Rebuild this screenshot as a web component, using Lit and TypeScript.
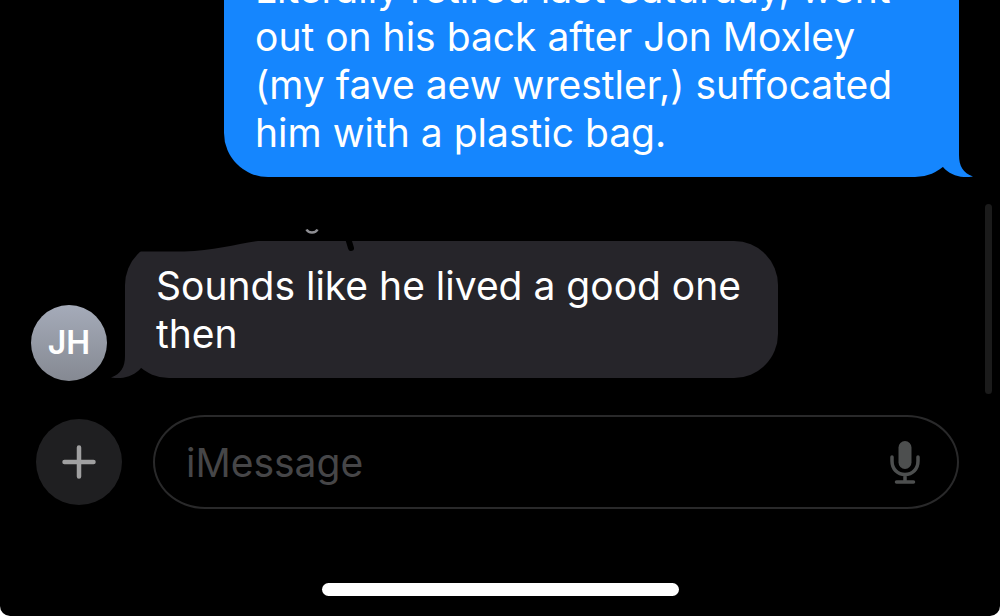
import { LitElement, html, css } from "lit";
import { customElement, property } from "lit/decorators.js";

@customElement("message-bubble")
class MessageBubble extends LitElement {
  @property({ type: Boolean, reflect: true }) sent = false;

  static styles = css`
    :host {
      display: block;
      position: relative;
      box-sizing: border-box;
      padding: 21px 31px 20px;
      border-radius: 44px;
      background: #26252a;
      color: #fff;
      max-width: 653px;
    }
    :host([sent]) {
      background: #1586fe;
      max-width: 735px;
    }
    .tail {
      position: absolute;
      bottom: 0;
      left: -14px;
      width: 36px;
      height: 44px;
      fill: #26252a;
      transform: scaleX(-1);
    }
    :host([sent]) .tail {
      left: auto;
      right: -14px;
      fill: #1586fe;
      transform: none;
    }
  `;

  render() {
    return html`<slot></slot>
      <svg class="tail" viewBox="0 0 36 44" aria-hidden="true">
        <path d="M0 0H22V22C22 33 26 40 36 43.5C25 45.500 13 42.500 6 34L0 28Z" />
      </svg>`;
  }
}

@customElement("app-root")
class AppRoot extends LitElement {
  static styles = css`
    :host {
      display: block;
      height: 100vh;
      background: #fff;
      font: 400 39px/48px Inter, "Liberation Sans", sans-serif;
    }
    .screen {
      display: flex;
      flex-direction: column;
      height: 100%;
      overflow: hidden;
      background: #000;
      border-radius: 0 0 10px 10px;
    }
    .thread {
      flex: 1;
      min-height: 0;
      position: relative;
      display: flex;
      flex-direction: column;
      justify-content: flex-end;
      gap: 64px;
      padding: 0 41px 34px 31px;
      overflow: hidden;
    }
    .sent {
      flex: none;
      align-self: flex-end;
    }
    .received {
      flex: none;
      display: flex;
      align-items: flex-end;
      gap: 18px;
    }
    .received message-bubble {
      margin-bottom: 3px;
    }
    .avatar {
      flex: none;
      display: grid;
      place-items: center;
      width: 76px;
      height: 76px;
      border-radius: 50%;
      background: linear-gradient(#a5abb9, #858992);
      color: #fff;
      font-size: 32px;
      font-weight: 600;
    }
    .marks {
      position: absolute;
      left: -5px;
      top: -21px;
      width: 260px;
      height: 32px;
    }
    .scrollbar {
      position: absolute;
      right: 8px;
      bottom: 21px;
      width: 7px;
      height: 190px;
      border-radius: 4px;
      background: #1b1b1b;
    }
    .composer {
      flex: none;
      display: flex;
      align-items: center;
      gap: 31px;
      padding: 0 41px 0 36px;
    }
    .add {
      flex: none;
      display: grid;
      place-items: center;
      width: 86px;
      height: 86px;
      padding: 0;
      border: 0;
      border-radius: 50%;
      background: #1f1f21;
    }
    .field {
      flex: 1;
      display: flex;
      align-items: center;
      box-sizing: border-box;
      height: 94px;
      padding: 0 36px 0 31px;
      border: 2px solid #29292a;
      border-radius: 52px / 47px;
    }
    .field input {
      flex: 1;
      min-width: 0;
      padding: 2px 0 0;
      border: 0;
      outline: 0;
      background: none;
      color: #fff;
      font: inherit;
    }
    .field input::placeholder {
      color: #464648;
      opacity: 1;
    }
    .mic {
      padding: 0;
      border: 0;
      background: none;
      display: grid;
    }
    .home {
      flex: none;
      align-self: center;
      width: 357px;
      height: 13px;
      margin: 74px 0 20px;
      border-radius: 7px;
      background: #fff;
    }
  `;

  render() {
    return html`<main class="screen">
      <section class="thread" aria-label="Conversation">
        <message-bubble class="sent" sent
          >Literally retired last Saturday, went out on his back after Jon Moxley (my fave aew wrestler,) suffocated him with a plastic bag.</message-bubble
        >
        <div class="received">
          <div class="avatar">JH</div>
          <message-bubble
            >Sounds like he lived a good one then
            <svg class="marks" viewBox="120 220 260 32" aria-hidden="true">
              <path d="M120 220H262V240.500C240 243 215 251 184 251.500H120Z" fill="#000" />
              <path d="M348 238L351 248" stroke="#000" stroke-width="6" stroke-linecap="round" />
              <path d="M306.500 229.500Q308 232.500 312 232.500T317.500 229.500" fill="none" stroke="#8e8e93" stroke-width="2.500" />
            </svg>
          </message-bubble>
        </div>
        <div class="scrollbar"></div>
      </section>
      <form class="composer" @submit=${(e: Event) => e.preventDefault()}>
        <button class="add" type="button" aria-label="Add attachment">
          <svg width="34" height="34" viewBox="0 0 34 34">
            <path d="M17 2.500V31.500M2.500 17H31.500" stroke="#a0a0a1" stroke-width="4.500" stroke-linecap="round" />
          </svg>
        </button>
        <div class="field">
          <input type="text" placeholder="iMessage" aria-label="iMessage" />
          <button class="mic" type="button" aria-label="Dictate">
            <svg width="32" height="44" viewBox="0 0 32 44" fill="none" stroke="#4d4f4f" stroke-width="3.500" stroke-linecap="round">
              <rect x="9.500" y="1" width="13" height="28" rx="6.500" fill="#4d4f4f" stroke="none" />
              <path d="M3 17V21C3 29 8.500 34.500 16 34.500S29 29 29 21V17M16 34.500V42M7.500 42H24.500" />
            </svg>
          </button>
        </div>
      </form>
      <div class="home"></div>
    </main>`;
  }
}
